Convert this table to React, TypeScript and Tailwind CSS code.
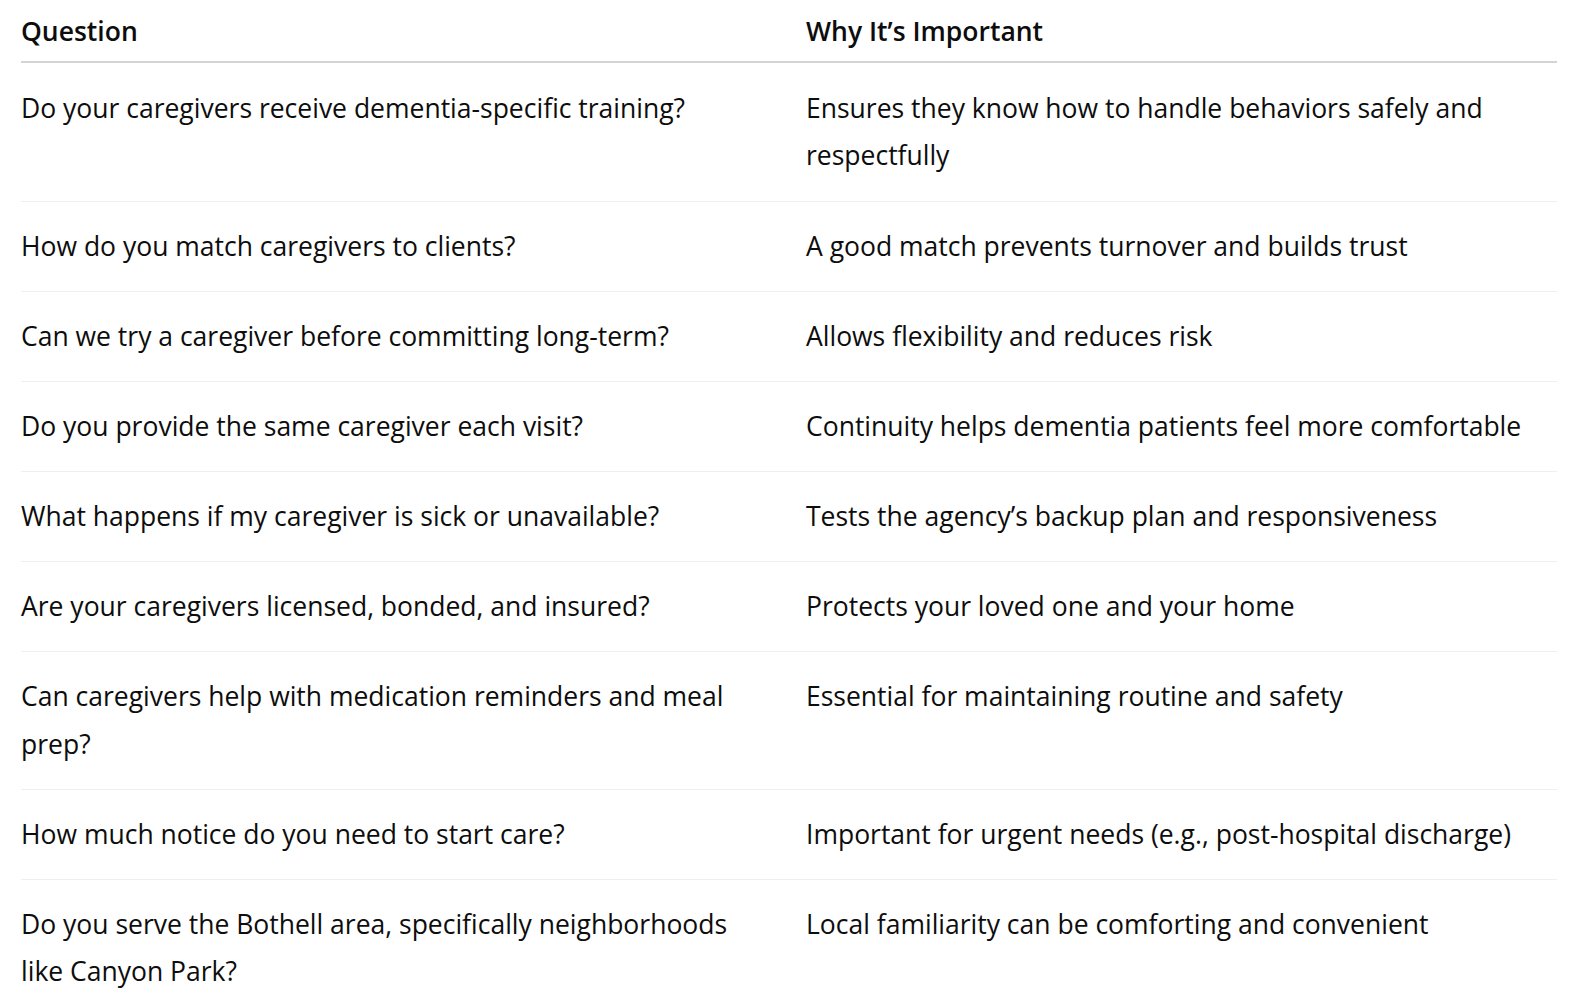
const rows: [string, string][] = [
  ['Do your caregivers receive dementia-specific training?', 'Ensures they know how to handle behaviors safely and respectfully'],
  ['How do you match caregivers to clients?', 'A good match prevents turnover and builds trust'],
  ['Can we try a caregiver before committing long-term?', 'Allows flexibility and reduces risk'],
  ['Do you provide the same caregiver each visit?', 'Continuity helps dementia patients feel more comfortable'],
  ['What happens if my caregiver is sick or unavailable?', 'Tests the agency\u2019s backup plan and responsiveness'],
  ['Are your caregivers licensed, bonded, and insured?', 'Protects your loved one and your home'],
  ['Can caregivers help with medication reminders and meal prep?', 'Essential for maintaining routine and safety'],
  ['How much notice do you need to start care?', 'Important for urgent needs (e.g., post-hospital discharge)'],
  ['Do you serve the Bothell area, specifically neighborhoods like Canyon Park?', 'Local familiarity can be comforting and convenient'],
];

export default function App() {
  return (
    <div className="min-h-screen bg-white pl-[21px] pr-[28px] text-[#0d0d0d] [font-family:'Open_Sans',sans-serif]">
      <table className="w-full table-fixed border-collapse text-left text-[26.5px] leading-[47.5px]">
        <colgroup>
          <col className="w-[785px]" />
          <col />
        </colgroup>
        <thead>
          <tr className="border-b-2 border-[#d4d4d4]">
            <th className="pr-[44px] pt-[8px] pb-[5px] font-semibold">Question</th>
            <th className="pt-[8px] pb-[5px] font-semibold">Why It’s Important</th>
          </tr>
        </thead>
        <tbody>
          {rows.map(([q, why], i) => {
            // first body row sits a touch lower under the heavier header rule
            const pad = i === 0 ? 'pt-[22px] pb-[21.5px]' : 'pt-[21px] pb-[20.5px]';
            return (
              <tr key={q} className="border-b border-[#efefef] last:border-b-0">
                <td className={`pr-[44px] align-top font-normal ${pad}`}>{q}</td>
                <td className={`align-top font-normal ${pad}`}>{why}</td>
              </tr>
            );
          })}
        </tbody>
      </table>
    </div>
  );
}
